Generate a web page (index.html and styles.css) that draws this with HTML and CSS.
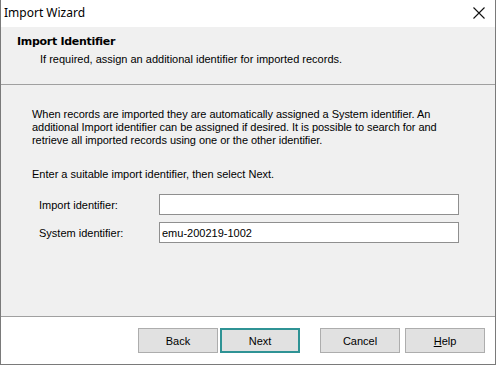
FILE: index.html
```html
<!DOCTYPE html>
<html lang="en">
<head>
    <meta charset="UTF-8">
    <title>Import Wizard</title>
    <link rel="stylesheet" href="styles.css">
</head>
<body>

<div class="window">
    <div class="titlebar">
        <span class="title">Import Wizard</span>
        <svg class="close" width="12" height="12" viewBox="0 0 12 12">
            <path d="M0.5 0.5 L11.5 11.5 M11.5 0.5 L0.5 11.5" stroke="#111" stroke-width="1.1" fill="none"/>
        </svg>
    </div>

    <div class="header">
        <h1>Import Identifier</h1>
        <p>If required, assign an additional identifier for imported records.</p>
    </div>

    <div class="content">
        <p class="intro">When records are imported they are automatically assigned a System identifier. An<br>
        additional Import identifier can be assigned if desired. It is possible to search for and<br>
        retrieve all imported records using one or the other identifier.</p>
        <p class="prompt">Enter a suitable import identifier, then select Next.</p>
        <div class="form-group">
            <label for="importId">Import identifier:</label>
            <input type="text" id="importId">
        </div>
        <div class="form-group">
            <label for="systemId">System identifier:</label>
            <input type="text" id="systemId" value="emu-200219-1002">
        </div>
    </div>

    <div class="footer">
        <button class="button">Back</button>
        <button class="button default">Next</button>
        <button class="button cancel">Cancel</button>
        <button class="button"><u>H</u>elp</button>
    </div>
</div>

</body>
</html>
```

FILE: styles.css
```css
body {
    margin: 0;
    font-family: 'Liberation Sans', Arial, sans-serif;
    font-size: 11px;
    color: #000;
    background: #fff;
}
.window {
    width: 496px;
    height: 365px;
    box-sizing: border-box;
    border: 1px solid #7a7a7a;
    border-top: none;
    display: flex;
    flex-direction: column;
}
.titlebar {
    height: 27px;
    background: #fff;
    display: flex;
    align-items: center;
    justify-content: space-between;
    padding: 0 10px 0 3px;
}
.title {
    font-family: 'Noto Sans', sans-serif;
    font-size: 12px;
    margin-top: -2px;
}
.close {
    margin-top: -1px;
}
.header {
    height: 58px;
    box-sizing: border-box;
    background: #f0f0f0;
    border-bottom: 1px solid #a0a0a0;
    padding: 8px 0 0 16px;
}
.header h1 {
    margin: 0;
    font-size: 11px;
    font-family: 'DejaVu Sans', sans-serif;
    font-weight: bold;
    letter-spacing: -0.3px;
    line-height: 14px;
}
.header p {
    margin: 3px 0 0 23px;
    line-height: 14px;
}
.content {
    flex: 1;
    background: #f0f0f0;
    border-bottom: 1px solid #a0a0a0;
    padding: 23px 0 0 31px;
}
.intro {
    margin: 0;
    line-height: 13px;
    letter-spacing: -0.05px;
}
.prompt {
    margin: 21px 0 13px;
    line-height: 13px;
}
.form-group {
    display: flex;
    align-items: center;
    margin-bottom: 7px;
}
.form-group label {
    width: 120px;
    padding-left: 7px;
}
.form-group input {
    width: 300px;
    height: 21px;
    box-sizing: border-box;
    margin: 0;
    padding: 0 2px;
    border: 1px solid #8f8f8f;
    background: #fff;
    font-family: 'Liberation Sans', Arial, sans-serif;
    font-size: 11px;
    outline: none;
}
.footer {
    height: 47px;
    background: #fff;
    display: flex;
    align-items: center;
    justify-content: flex-end;
    padding-right: 10px;
}
.button {
    width: 80px;
    height: 25px;
    box-sizing: border-box;
    margin-left: 5px;
    background: #e1e1e1;
    border: 1px solid #adadad;
    font-family: 'Liberation Sans', Arial, sans-serif;
    font-size: 11px;
    color: #000;
    padding: 0;
}
.button.default {
    margin-left: 2px;
    border: 2px solid #2f9395;
}
.button.cancel {
    margin-left: 20px;
}
```
